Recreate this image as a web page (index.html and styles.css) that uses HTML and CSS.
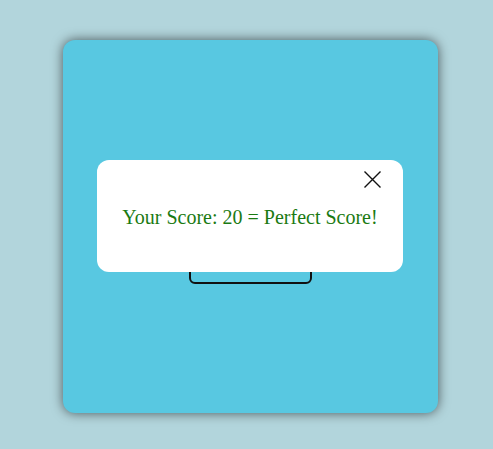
FILE: index.html
```html
<!DOCTYPE html>
<html>
<head>
<meta charset="utf-8">
<link rel="stylesheet" href="styles.css">
</head>
<body>
<div class="card">
  <button class="play">Start</button>
  <div class="modal">
    <button class="close" aria-label="Close">
      <svg width="19" height="19" viewBox="0 0 19 19"><path d="M1.5 1.5 L17.5 17.5 M17.5 1.5 L1.5 17.5" stroke="#111" stroke-width="1.4" fill="none"/></svg>
    </button>
    <p class="score">Your Score: 20 = Perfect Score!</p>
  </div>
</div>
</body>
</html>
```
FILE: styles.css
```css
html, body { margin: 0; padding: 0; }
body {
  width: 493px;
  height: 449px;
  background: #b2d5dc;
  padding: 40px 0 0 63px;
  box-sizing: border-box;
  font-family: "Liberation Serif", "Times New Roman", serif;
}
.card {
  position: relative;
  width: 375px;
  height: 373px;
  background: #58c8e1;
  border-radius: 12px;
  box-shadow: 0 0 12px rgba(0,0,0,0.6);
  display: flex;
  justify-content: center;
  align-items: flex-start;
}
.play {
  margin-top: 204px;
  width: 123px;
  height: 40px;
  background: transparent;
  border: 2px solid #111;
  border-radius: 6px;
  color: #111;
  font-family: inherit;
  font-size: 18px;
}
.modal {
  position: absolute;
  left: 34px;
  top: 120px;
  width: 306px;
  height: 112px;
  background: #fff;
  border-radius: 12px;
  display: flex;
  align-items: center;
  justify-content: center;
}
.close {
  position: absolute;
  top: 10px;
  right: 21px;
  width: 19px;
  height: 19px;
  padding: 0;
  border: 0;
  background: none;
  display: block;
}
.close svg { display: block; }
.score {
  margin: 2px 0 0;
  color: #1a7a12;
  font-size: 20px;
}
```
